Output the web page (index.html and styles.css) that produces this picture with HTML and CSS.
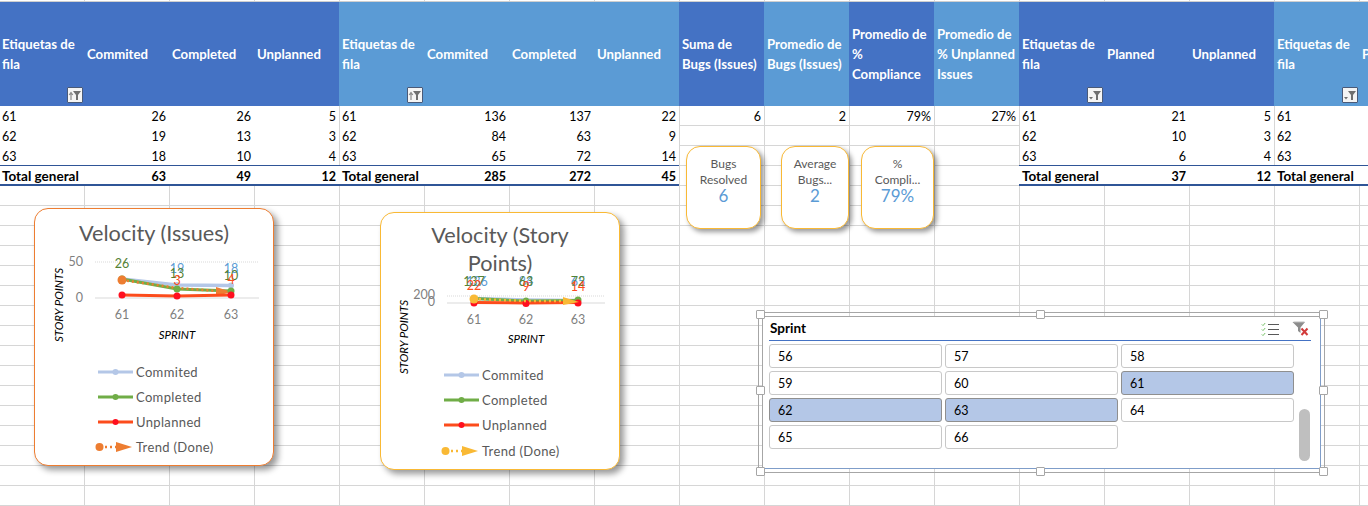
FILE: index.html
```html
<!DOCTYPE html>
<html lang="es">
<head>
<meta charset="utf-8">
<title>Velocity dashboard</title>
<link rel="stylesheet" href="styles.css">
</head>
<body>
<main class="sheet">
  <section class="pivot">
    <div class="h dark">Etiquetas de<br>fila<span class="fbtn"><svg viewBox="0 0 14 14" width="14" height="14"><path d="M5 3h8L10 7v5H8V7z" fill="#6f6f6f"/><path d="M3 12V5M1.2 7 3 4.6 4.8 7" fill="none" stroke="#8a8a8a" stroke-width="1.2"/></svg></span></div>
    <div class="h dark">Commited</div><div class="h dark">Completed</div><div class="h dark">Unplanned</div>
    <div class="h light">Etiquetas de<br>fila<span class="fbtn"><svg viewBox="0 0 14 14" width="14" height="14"><path d="M5 3h8L10 7v5H8V7z" fill="#6f6f6f"/><path d="M3 12V5M1.2 7 3 4.6 4.8 7" fill="none" stroke="#8a8a8a" stroke-width="1.2"/></svg></span></div>
    <div class="h light">Commited</div><div class="h light">Completed</div><div class="h light">Unplanned</div>
    <div class="h dark">Suma de<br>Bugs (Issues)</div>
    <div class="h light">Promedio de<br>Bugs (Issues)</div>
    <div class="h dark">Promedio de<br>%<br>Compliance</div>
    <div class="h light">Promedio de<br>% Unplanned<br>Issues</div>
    <div class="h dark">Etiquetas de<br>fila<span class="fbtn"><svg viewBox="0 0 14 14" width="14" height="14"><path d="M5 3h8L10 7v5H8V7z" fill="#6f6f6f"/><path d="M1 9h4L3 11.5z" fill="#6f6f6f"/></svg></span></div>
    <div class="h dark">Planned</div><div class="h dark">Unplanned</div>
    <div class="h light">Etiquetas de<br>fila<span class="fbtn"><svg viewBox="0 0 14 14" width="14" height="14"><path d="M5 3h8L10 7v5H8V7z" fill="#6f6f6f"/><path d="M1 9h4L3 11.5z" fill="#6f6f6f"/></svg></span></div>
    <div class="h light">Planned</div>

    <div class="c">61</div><div class="c n">26</div><div class="c n">26</div><div class="c n">5</div>
    <div class="c sep">61</div><div class="c n">136</div><div class="c n">137</div><div class="c n">22</div>
    <div class="c n e">6</div><div class="c n e">2</div><div class="c n e">79%</div><div class="c n e">27%</div>
    <div class="c sep">61</div><div class="c n">21</div><div class="c n">5</div><div class="c sep">61</div><div class="c"></div>

    <div class="c">62</div><div class="c n">19</div><div class="c n">13</div><div class="c n">3</div>
    <div class="c sep">62</div><div class="c n">84</div><div class="c n">63</div><div class="c n">9</div>
    <div class="e"></div><div class="e"></div><div class="e"></div><div class="e"></div>
    <div class="c sep">62</div><div class="c n">10</div><div class="c n">3</div><div class="c sep">62</div><div class="c"></div>

    <div class="c">63</div><div class="c n">18</div><div class="c n">10</div><div class="c n">4</div>
    <div class="c sep">63</div><div class="c n">65</div><div class="c n">72</div><div class="c n">14</div>
    <div class="e"></div><div class="e"></div><div class="e"></div><div class="e"></div>
    <div class="c sep">63</div><div class="c n">6</div><div class="c n">4</div><div class="c sep">63</div><div class="c"></div>

    <div class="c t">Total general</div><div class="c n t">63</div><div class="c n t">49</div><div class="c n t">12</div>
    <div class="c t">Total general</div><div class="c n t">285</div><div class="c n t">272</div><div class="c n t">45</div>
    <div class="e"></div><div class="e"></div><div class="e"></div><div class="e"></div>
    <div class="c t">Total general</div><div class="c n t">37</div><div class="c n t">12</div><div class="c t">Total general</div><div class="c t"></div>
  </section>

  <article class="kpi kpi-a"><p>Bugs<br>Resolved</p><strong>6</strong></article>
  <article class="kpi kpi-b"><p>Average<br>Bugs...</p><strong>2</strong></article>
  <article class="kpi kpi-c"><p>%<br>Compli...</p><strong>79%</strong></article>

  <article class="chart chart-a">
    <h2>Velocity (Issues)</h2>
    <svg class="plot plot-a" viewBox="35 247 238 100" width="238" height="100">
      <line x1="95" y1="262" x2="259" y2="262" class="grid"/>
      <line x1="95" y1="298" x2="259" y2="298" class="axis"/>
      <text x="83" y="266" class="tick anchor-end">50</text>
      <text x="83" y="302" class="tick anchor-end">0</text>
      <text x="122" y="319" class="tick mid">61</text>
      <text x="177" y="319" class="tick mid">62</text>
      <text x="231" y="319" class="tick mid">63</text>
      <text x="177" y="339" class="atitle mid">SPRINT</text>
      <text transform="translate(63 305) rotate(-90)" class="atitle mid">STORY POINTS</text>
      <polyline points="122,279 177,285 231,285.500" class="s-com"/>
      <circle cx="177" cy="285" r="3" fill="#b4c7e7"/><circle cx="231" cy="285.500" r="3" fill="#b4c7e7"/>
      <polyline points="122,279 177,289 231,291" class="s-cmp"/>
      <polyline points="122,280 177,288 217,291" class="s-tr or"/>
      <path d="M216 287 232 292 216 296z" fill="#ed7d31"/>
      <circle cx="122" cy="279" r="3.500" fill="#70ad47"/><circle cx="177" cy="289" r="3.500" fill="#70ad47"/><circle cx="231" cy="291" r="3.500" fill="#70ad47"/>
      <polyline points="122,295 177,296 231,295" class="s-unp"/>
      <circle cx="122" cy="295" r="3.500" fill="#ff0f1f"/><circle cx="177" cy="296" r="3.500" fill="#ff0f1f"/><circle cx="231" cy="295" r="3.500" fill="#ff0f1f"/>
      <circle cx="122" cy="280" r="4.500" fill="#ed7d31"/>
      <text x="122" y="268" class="dl g mid">26</text>
      <text x="177" y="273" class="dl b mid">19</text><text x="177" y="278" class="dl g mid">13</text><text x="177" y="285" class="dl r mid">3</text>
      <text x="231" y="273" class="dl b mid">18</text><text x="231" y="280" class="dl g mid">10</text><text x="231" y="284" class="dl r mid">4</text>
    </svg>
    <ul class="legend">
      <li><svg viewBox="0 0 40 12" width="40" height="12"><line x1="3" y1="6" x2="38" y2="6" stroke="#b4c7e7" stroke-width="3"/><circle cx="20.500" cy="6" r="3" fill="#b4c7e7"/></svg>Commited</li>
      <li><svg viewBox="0 0 40 12" width="40" height="12"><line x1="3" y1="6" x2="38" y2="6" stroke="#70ad47" stroke-width="3"/><circle cx="20.500" cy="6" r="3" fill="#70ad47"/></svg>Completed</li>
      <li><svg viewBox="0 0 40 12" width="40" height="12"><line x1="3" y1="6" x2="38" y2="6" stroke="#fc4c1c" stroke-width="3"/><circle cx="20.500" cy="6" r="3" fill="#ff0f1f"/></svg>Unplanned</li>
      <li><svg viewBox="0 0 40 12" width="40" height="12"><circle cx="4.500" cy="6" r="4" fill="#ed7d31"/><line x1="10" y1="6" x2="22" y2="6" stroke="#ed7d31" stroke-width="2.500" stroke-dasharray="2 3"/><path d="M21 1 37 6 21 11z" fill="#ed7d31"/></svg>Trend (Done)</li>
    </ul>
  </article>

  <article class="chart chart-b">
    <h2>Velocity (Story<br>Points)</h2>
    <svg class="plot plot-b" viewBox="381 278 238 70" width="238" height="70">
      <line x1="447" y1="295" x2="605" y2="295" class="grid"/>
      <line x1="447" y1="302" x2="605" y2="302" class="axis"/>
      <text x="435" y="298" class="tick anchor-end">200</text>
      <text x="435" y="305" class="tick anchor-end">0</text>
      <text x="474" y="323" class="tick mid">61</text>
      <text x="526" y="323" class="tick mid">62</text>
      <text x="578" y="323" class="tick mid">63</text>
      <text x="526" y="342" class="atitle mid">SPRINT</text>
      <polyline points="474,297.500 526,299 578,299.500" class="s-com"/>
      <polyline points="474,297.500 526,300 578,299.500" class="s-cmp"/>
      <circle cx="526" cy="299.500" r="3" fill="#70ad47"/><circle cx="578" cy="299" r="3.500" fill="#70ad47"/>
      <polyline points="474,301.500 526,302 578,301.500" class="s-unp"/>
      <circle cx="474" cy="302" r="3.500" fill="#ff0f1f"/><circle cx="526" cy="302.500" r="3.500" fill="#ff0f1f"/><circle cx="578" cy="302" r="3.500" fill="#ff0f1f"/>
      <polyline points="474,298 526,300 566,300" class="s-tr ye"/>
      <circle cx="474" cy="298" r="4.500" fill="#f9b935"/>
      <path d="M563 296 579 301 563 304z" fill="#f9b935"/>
      <text x="477" y="285" class="dl b mid">136</text><text x="474" y="285" class="dl g mid">137</text><text x="474" y="289" class="dl r mid">22</text>
      <text x="526" y="285" class="dl b mid">84</text><text x="526" y="285" class="dl g mid">63</text><text x="526" y="290" class="dl r mid">9</text>
      <text x="578" y="285" class="dl b mid">65</text><text x="578" y="285" class="dl g mid">72</text><text x="578" y="290" class="dl r mid">14</text>
    </svg>
    <span class="ytitle">STORY POINTS</span>
    <ul class="legend legend-b">
      <li><svg viewBox="0 0 40 12" width="40" height="12"><line x1="3" y1="6" x2="38" y2="6" stroke="#b4c7e7" stroke-width="3"/><circle cx="20.500" cy="6" r="3" fill="#b4c7e7"/></svg>Commited</li>
      <li><svg viewBox="0 0 40 12" width="40" height="12"><line x1="3" y1="6" x2="38" y2="6" stroke="#70ad47" stroke-width="3"/><circle cx="20.500" cy="6" r="3" fill="#70ad47"/></svg>Completed</li>
      <li><svg viewBox="0 0 40 12" width="40" height="12"><line x1="3" y1="6" x2="38" y2="6" stroke="#fc4c1c" stroke-width="3"/><circle cx="20.500" cy="6" r="3" fill="#ff0f1f"/></svg>Unplanned</li>
      <li><svg viewBox="0 0 40 12" width="40" height="12"><circle cx="4.500" cy="6" r="4" fill="#f9b935"/><line x1="10" y1="6" x2="22" y2="6" stroke="#f9b935" stroke-width="2.500" stroke-dasharray="2 3"/><path d="M21 1 37 6 21 11z" fill="#f9b935"/></svg>Trend (Done)</li>
    </ul>
  </article>

  <aside class="frame">
    <span class="hd hd-tl"></span><span class="hd hd-tm"></span><span class="hd hd-tr"></span>
    <span class="hd hd-ml"></span><span class="hd hd-mr"></span>
    <span class="hd hd-bl"></span><span class="hd hd-bm"></span><span class="hd hd-br"></span>
    <div class="slicer">
      <header class="sl-head">
        <h3>Sprint</h3>
        <svg viewBox="0 0 18 14" width="18" height="14"><path d="M.8 2.400 2 3.600 4.200 1M.8 7.400 2 8.600 4.200 6M.8 12.400 2 13.600 4.200 11" fill="none" stroke="#7ac36a" stroke-width="1"/><path d="M7 2.500h11M7 7.500h11M7 12.500h11" stroke="#595959" stroke-width="1.200"/></svg>
        <svg viewBox="0 0 17 15" width="17" height="15"><path d="M.5 1h12.500L8.500 6.500V12L6 10V6.500z" fill="#8c8c8c"/><path d="M1.500 1h11" stroke="#bdbdbd"/><path d="M9.500 7.500 15.500 14M15.500 7.500 9.500 14" stroke="#d23b3b" stroke-width="2"/></svg>
      </header>
      <div class="sl-grid">
        <button>56</button><button>57</button><button>58</button>
        <button>59</button><button>60</button><button class="on">61</button>
        <button class="on">62</button><button class="on">63</button><button>64</button>
        <button>65</button><button>66</button>
      </div>
      <span class="sl-scroll"></span>
    </div>
  </aside>
</main>
</body>
</html>
```

FILE: styles.css
```css
* { box-sizing: border-box; }
html, body { margin: 0; padding: 0; }
body { background: #fff; font-family: Lato, "Liberation Sans", sans-serif; }

.sheet {
  position: relative;
  width: 1368px;
  height: 506px;
  overflow: hidden;
  padding-top: 2px;
  background-color: #fff;
  background-image:
    linear-gradient(to right, transparent 84px, #d6d6d6 84px),
    linear-gradient(to bottom, transparent 19px, #d6d6d6 19px);
  background-size: 85px 20px;
  background-position: 0 6px;
}

.pivot {
  display: grid;
  grid-template-columns: repeat(17, 85px);
  grid-template-rows: 104px repeat(4, 20px);
  margin-left: -1px;
  box-shadow: 0 -1px 0 #cfcfcf;
  font-size: 12.500px;
}

.h {
  position: relative;
  align-content: center;
  padding: 0 0 1px 3px;
  color: #fff;
  font-weight: 700;
  font-size: 13.200px;
  line-height: 20px;
  white-space: nowrap;
}
.dark { background: #4472c4; }
.light { background: #5b9bd5; }

.fbtn {
  position: absolute;
  right: 1px;
  bottom: 3px;
  display: flex;
  width: 16px;
  height: 16px;
  align-items: center;
  justify-content: center;
  background: #f4f4f4;
  border: 1px solid #4a5a78;
  border-radius: 1px;
}

.c {
  background: #fff;
  padding: 1px 3px 0;
  line-height: 20px;
  color: #000;
  white-space: nowrap;
}
.n { text-align: right; }
.sep { box-shadow: inset 1px 0 0 #d6d6d6; }
.e { background: transparent; }
.t {
  padding-top: 0;
  font-weight: 700;
  font-size: 13.500px;
  line-height: 21px;
  border-top: 1px solid #2f5597;
  border-bottom: 2px solid #2f5597;
  margin-top: -1px;
  height: 21px;
}
.t.n { font-size: 12.500px; }

.kpi {
  position: absolute;
  top: 146px;
  height: 83px;
  background: #fff;
  border: 1px solid #f9b935;
  border-radius: 14px;
  box-shadow: 3px 3px 5px rgba(0, 0, 0, .4);
  padding-top: 9px;
  text-align: center;
  color: #595959;
}
.kpi p { margin: 0; font-size: 12px; line-height: 16px; }
.kpi strong { display: block; font-weight: 400; font-size: 17px; line-height: 16px; color: #5b9bd5; }
.kpi-a { left: 686px; width: 75px; }
.kpi-b { left: 781px; width: 68px; }
.kpi-c { left: 861px; width: 73px; }

.chart {
  position: absolute;
  width: 240px;
  height: 258px;
  background: #fff;
  border-radius: 14px;
  box-shadow: 4px 4px 6px rgba(0, 0, 0, .4);
  padding-top: 10px;
  color: #595959;
}
.chart-a { left: 34px; top: 208px; border: 1px solid #ed7d31; }
.chart-b { left: 380px; top: 212px; border: 1px solid #f9b935; }
.chart h2 {
  margin: 0;
  font-size: 21.700px;
  font-weight: 400;
  line-height: 28px;
  text-align: center;
}
.chart-b h2 { margin: -2px 0 2px; }
.plot { display: block; overflow: visible; }
.plot-a { margin-bottom: 12px; }
.plot-b { margin-bottom: 13px; }

.grid { stroke: #d9d9d9; stroke-dasharray: 1 1; }
.axis { stroke: #d9d9d9; }
.tick { font-size: 12.500px; fill: #7f7f7f; }
.atitle { font-size: 11.500px; font-style: italic; fill: #000; }
.dl { font-size: 12.500px; }
.mid { text-anchor: middle; }
.anchor-end { text-anchor: end; }
.g { fill: #548235; }
.b { fill: #5b9bd5; }
.r { fill: #fc4c1c; }
.s-com, .s-cmp, .s-unp, .s-tr { fill: none; }
.s-com { stroke: #b4c7e7; stroke-width: 3.500; }
.s-cmp { stroke: #70ad47; stroke-width: 3; }
.s-unp { stroke: #fc4c1c; stroke-width: 3; }
.s-tr { stroke-width: 2.500; stroke-dasharray: 2 3; }
.or { stroke: #ed7d31; }
.ye { stroke: #f9b935; }

.ytitle {
  position: absolute;
  left: 22px;
  top: 124px;
  transform: translate(-50%, -50%) rotate(-90deg);
  font-size: 11.500px;
  font-style: italic;
  color: #000;
  white-space: nowrap;
}

.legend {
  list-style: none;
  margin: 0;
  padding: 0 0 0 60px;
  font-size: 13px;
  letter-spacing: .35px;
}
.legend li { display: flex; align-items: center; gap: 1px; height: 25px; }
.legend-b li:last-child { height: 27px; }

.frame {
  position: absolute;
  left: 758px;
  top: 312px;
  width: 567px;
  height: 161px;
  padding: 3px;
  border: 1px solid #a6a6a6;
}
.slicer {
  position: relative;
  height: 100%;
  background: #fff;
  border: 1px solid #a6a6a6;
  border-bottom-color: #7f9dc9;
  border-right-color: #7f9dc9;
  padding: 0 8px 0 6px;
}
.sl-head {
  display: flex;
  align-items: center;
  height: 24px;
  border-bottom: 1px solid #4472c4;
  gap: 13px;
  width: 542px;
}
.sl-head h3 { margin: 0 auto 2px 1px; font-size: 13.500px; font-weight: 700; color: #000; }
.sl-head svg:nth-of-type(1) { margin-right: -1px; transform: translateX(-1px); }
.sl-head svg:last-child { margin-right: 2px; }
.sl-grid {
  display: grid;
  grid-template-columns: repeat(3, 173px);
  grid-auto-rows: 24px;
  gap: 3px;
  margin-top: 3px;
}
.sl-grid button {
  background: #fff;
  border: 1px solid #c8c8c8;
  border-radius: 3px;
  padding: 0 0 0 8px;
  text-align: left;
  font: 400 12.500px Lato, "Liberation Sans", sans-serif;
  color: #000;
}
.sl-grid .on { background: #b4c7e7; border-color: #8f8f8f; }
.sl-scroll {
  position: absolute;
  left: 536px;
  top: 92px;
  width: 11px;
  height: 52px;
  background: #bfbfbf;
  border-radius: 6px;
}

.hd {
  position: absolute;
  width: 9px;
  height: 9px;
  background: #fff;
  border: 1px solid #a6a6a6;
  border-radius: 1px;
  z-index: 2;
}
.hd-tl { left: -3px; top: -3px; }
.hd-tm { left: 277px; top: -3px; }
.hd-tr { right: -4px; top: -3px; }
.hd-ml { left: -3px; top: 73px; }
.hd-mr { right: -4px; top: 73px; }
.hd-bl { left: -3px; bottom: -4px; }
.hd-bm { left: 277px; bottom: -4px; }
.hd-br { right: -4px; bottom: -4px; }
```
